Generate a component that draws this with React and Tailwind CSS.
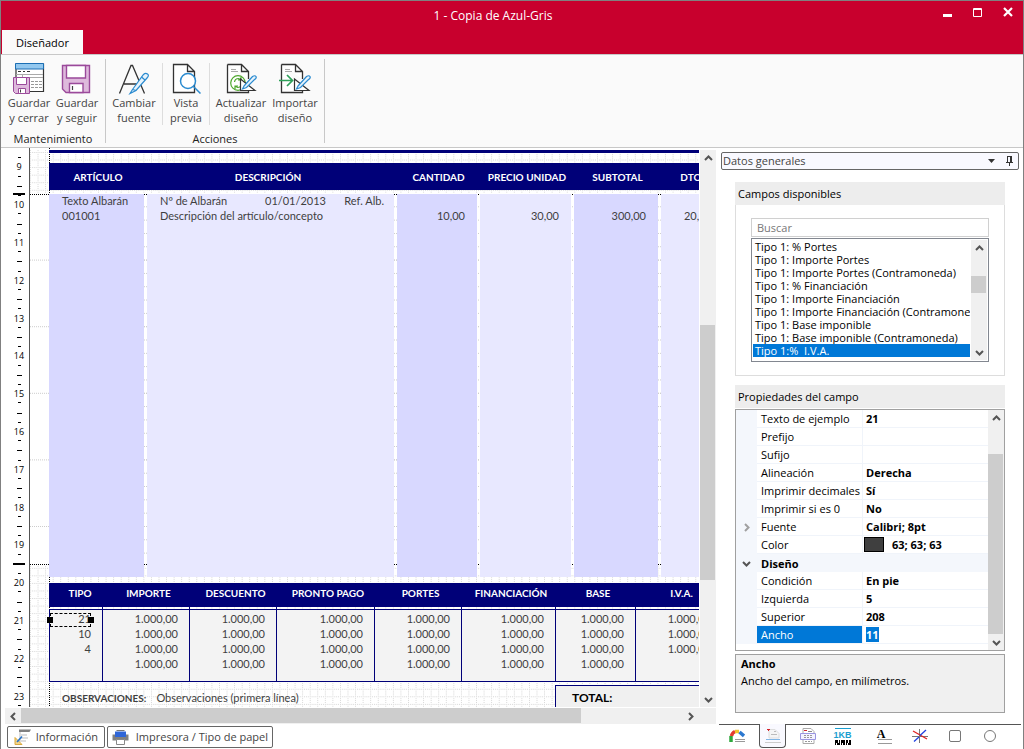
import { useState } from "react";

const fields = [
  "Tipo 1: % Portes",
  "Tipo 1: Importe Portes",
  "Tipo 1: Importe Portes (Contramoneda)",
  "Tipo 1: % Financiación",
  "Tipo 1: Importe Financiación",
  "Tipo 1: Importe Financiación (Contramoneda)",
  "Tipo 1: Base imponible",
  "Tipo 1: Base imponible (Contramoneda)",
  "Tipo 1:%  I.V.A.",
];

const properties = [
  { name: "Texto de ejemplo", value: "21" },
  { name: "Prefijo", value: "" },
  { name: "Sufijo", value: "" },
  { name: "Alineación", value: "Derecha" },
  { name: "Imprimir decimales", value: "Sí" },
  { name: "Imprimir si es 0", value: "No" },
  { name: "Fuente", value: "Calibri; 8pt", expandable: true },
  { name: "Color", value: "63; 63; 63", swatch: true },
  { name: "Diseño", group: true },
  { name: "Condición", value: "En pie" },
  { name: "Izquierda", value: "5" },
  { name: "Superior", value: "208" },
  { name: "Ancho", value: "11", editing: true },
];

const totalHeaders = ["TIPO", "IMPORTE", "DESCUENTO", "PRONTO PAGO", "PORTES", "FINANCIACIÓN", "BASE", "I.V.A."];
const amount = "1.000,00";
const totalRows = [
  ["21", amount, amount, amount, amount, amount, amount, amount],
  ["10", amount, amount, amount, amount, amount, amount, amount],
  ["4", amount, amount, amount, amount, amount, amount, amount],
  ["", amount, amount, amount, amount, amount, amount, ""],
];

const rulerMarks = [9, 10, 11, 12, 13, 14, 15, 16, 17, 18, 19, 20, 21, 22, 23];

/* ---------- icons ---------- */

function Floppy() {
  return (
    <g stroke="#9b4a9b" fill="#deb9dc">
      <path d="M1.5 1.5H28.5V28.5H5L1.5 25Z" strokeWidth="1.4" />
      <path d="M5.5 1.5H24.5V14H5.5Z" fill="#fff" strokeWidth="1.4" />
      <path d="M8.5 19.5H22V28.5H8.5Z" fill="#fff" strokeWidth="1.4" />
      <path d="M11.5 22V26" stroke="#444" strokeWidth="1.2" />
    </g>
  );
}

function SaveCloseIcon() {
  return (
    <svg width="32" height="32" viewBox="0 0 32 32" fill="none">
      <path d="M3 1H30.500V28.500H3Z" fill="#fff" stroke="#333" strokeWidth="1.200" />
      <path d="M2.500 .5H30.500V6H2.500Z" fill="#93c8ef" stroke="#1c6fb4" />
      <path d="M5 8.500H8M10 8.500H12M14 8.500H17" stroke="#333" />
      <path d="M3 11.500H30M9 14.500H30M9.500 11V15" stroke="#aaa" />
      <path d="M18 18.500H29M18 21.500H29M18 24.500H29" stroke="#999" strokeDasharray="3 1" />
      <g transform="translate(0 14)" stroke="#9b4a9b" fill="#deb9dc">
        <path d="M.5 .5H16.500V16.500H2.500L.5 14.500Z" />
        <path d="M3.500 .5H13.500V7.500H3.500Z" fill="#fff" />
        <path d="M5.500 11.500H12.500V16.500H5.500Z" fill="#fff" />
        <path d="M7.500 12.500V15.500" stroke="#444" />
      </g>
    </svg>
  );
}

function SaveIcon() {
  return (
    <svg width="32" height="32" viewBox="0 0 32 32" fill="none">
      <g transform="translate(0 1)"><Floppy /></g>
    </svg>
  );
}

function FontIcon() {
  return (
    <svg width="32" height="32" viewBox="0 0 32 32" fill="none">
      <path d="M1.500 30.500L13 2.500H14.500L26.500 30.500M6 21H22" stroke="#333" strokeWidth="1.300" />
      <g transform="translate(11 9)" stroke="#2b8bd0" strokeWidth="1.200" fill="#e6f3fc">
        <path d="M3.500 17.500L14.500 2.500Q16.500 .5 18.500 2T18 6L7 18.500L1 21.500Z" />
        <path d="M12.500 5L16 8M3.500 17.500L7 18.500" />
      </g>
    </svg>
  );
}

function PreviewIcon() {
  return (
    <svg width="32" height="32" viewBox="0 0 32 32" fill="none">
      <path d="M3.500 1.500H17.500L24.500 8.500V29.500H3.500ZM17.500 1.500V8.500H24.500" fill="#fff" stroke="#333" strokeWidth="1.300" />
      <circle cx="18" cy="18" r="7.500" fill="#fff" stroke="#2b8bd0" strokeWidth="1.500" />
      <path d="M23.500 23.500L30.500 30.500" stroke="#2b8bd0" strokeWidth="1.500" />
    </svg>
  );
}

function DesignIcon({ kind }) {
  return (
    <svg width="32" height="32" viewBox="0 0 32 32" fill="none">
      <path d="M2.500 1.500H16.500L23.500 8.500V16M23.500 28V29.500H2.500V1.500M16.500 1.500V8.500H23.500" fill="#fff" stroke="#333" strokeWidth="1.300" />
      <path d="M6 6.500H11M6 8.500H13" stroke="#aaa" />
      {kind === "refresh" ? (
        <g stroke="#4ea72e" strokeWidth="1.200">
          <circle cx="13" cy="20" r="7.300" fill="#fff" />
          <path d="M9.500 19Q10 15.500 13.500 15.500L16 17M16 14V17H13M16.500 21Q16 24.500 12.500 24.500L10 23M10 26V23H13" />
        </g>
      ) : (
        <path d="M0 17.500H13M8 12L13.500 17.500L8 23" stroke="#2fa15a" strokeWidth="1.700" />
      )}
      <path d="M15.500 16V27.500H30Z" fill="#fff" stroke="#333" strokeWidth="1.200" />
      <path d="M19 23L27.500 13.500Q30 12 31 13.500T29 17L21.500 24.500L17.500 26Z" fill="#e6f3fc" stroke="#2b8bd0" strokeWidth="1.200" />
    </svg>
  );
}

function Chevron({ dir = "up", muted }) {
  const turn = { up: "rotate-0", right: "rotate-90", down: "rotate-180", left: "-rotate-90" }[dir];
  return (
    <svg width="9" height="9" viewBox="0 0 9 9" className={turn} fill="none">
      <path d="M1 6L4.500 2.500L8 6" stroke={muted ? "#a0a0a0" : "#555"} strokeWidth="2" />
    </svg>
  );
}

function NotesIcon() {
  return (
    <svg width="18" height="18" viewBox="0 0 18 18" fill="none">
      <path d="M5 1.500H17L15.500 4H5Z" fill="#808080" />
      <path d="M6 4V14M7 7H13M7 10H14M7 13H12" stroke="#bbb" />
      <path d="M1 9.500V16.500H8Z" fill="#f4d58a" stroke="#d9a93c" />
      <path d="M3 14L8 8.500" stroke="#2873c8" strokeWidth="1.600" />
    </svg>
  );
}

function PrinterIcon() {
  return (
    <svg width="17" height="17" viewBox="0 0 17 17" fill="none">
      <path d="M.5 5.500H16.500V11.500H.5Z" fill="#808080" />
      <path d="M3 2.500H14V8H3Z" fill="#2f66d8" />
      <path d="M4.500 1.500H12.500" stroke="#777" />
      <path d="M4.500 10.500H12.500V15.500H4.500Z" fill="#fff" stroke="#888" />
    </svg>
  );
}

const toolTabs = [
  {
    label: "Datos",
    className: "w-9",
    icon: (
      <>
        <path d="M2 14V8" stroke="#2ea83c" strokeWidth="3.500" />
        <path d="M2.500 8Q3 5 6 3.500" stroke="#e23b2e" strokeWidth="3.500" />
        <path d="M6 3.500H10" stroke="#f2c32c" strokeWidth="3.500" />
        <path d="M10.500 4L15 8" stroke="#2b78d0" strokeWidth="3.500" />
        <path d="M6 11.500H16M6 13.500H16" stroke="#999" />
      </>
    ),
  },
  {
    label: "Propiedades",
    className: "mx-1 w-[27px] rounded-b border border-t-0 border-[#555] bg-[#f9f9ff]",
    icon: (
      <>
        <path d="M4 1.500H10L14 5.500V10H4Z" fill="#f5f5f5" stroke="#ddd" />
        <path d="M2 1.500H5M3.500 1V3" stroke="#d3222a" />
        <path d="M9 3.500H11M6 6.500H12" stroke="#bbb" />
        <path d="M1 11.500H15" stroke="#7fb6e6" />
        <path d="M0 14.500H16" stroke="#ccc" />
      </>
    ),
  },
  {
    label: "Impresión",
    className: "w-[35px]",
    icon: (
      <>
        <path d="M3 .5H11L14 3.500V15.500H3Z" fill="#fff" stroke="#aaa" />
        <path d="M4 2.500H7" stroke="#d3222a" />
        <path d="M8 3.500H12" stroke="#888" />
        <path d="M.5 5.500H15.500V11.500H.5Z" fill="#f3f2ff" stroke="#9a96e0" />
        <path d="M4 7.500H13M4 9.500H13M5 13.500H12" stroke="#999" strokeDasharray="2 1" />
      </>
    ),
  },
];

/* ---------- pieces ---------- */

function RibbonButton({ icon, top, bottom, className }) {
  return (
    <button type="button" className={`flex flex-col items-center text-[11px] leading-[15px] text-[#444] ${className}`}>
      {icon}
      <span>{top}</span>
      <span>{bottom}</span>
    </button>
  );
}

function ScrollButton({ dir }) {
  return (
    <button type="button" aria-label={dir} className="flex size-4 shrink-0 items-center justify-center">
      <Chevron dir={dir} />
    </button>
  );
}

function Ruler() {
  return (
    <div className="relative w-7 shrink-0 overflow-hidden">
      <div className="grid h-[567px] auto-rows-fr pl-2 text-[9px] leading-[1px]">
        {rulerMarks.map((n, i) => (
          <div key={n} className="flex flex-col items-center justify-between">
            <span className={`h-px w-[5px] ${i === 0 ? "" : "bg-black"}`} />
            <span className="h-px w-[3px] bg-black" />
            <span className="h-px">{n}</span>
            <span className="h-px w-[3px] bg-black" />
            <span className="h-px" />
          </div>
        ))}
      </div>
      <span className="absolute top-[45px] left-3 h-0.5 w-3 bg-black" />
      <span className="absolute top-[415px] left-3 h-0.5 w-3 bg-black" />
    </div>
  );
}

function CanvasGrid() {
  return (
    <svg className="absolute inset-0 size-full" fill="none" shapeRendering="crispEdges">
      <defs>
        <pattern id="fine" width="7.560" height="7.560" patternUnits="userSpaceOnUse" y="4">
          <path d="M0 .5H7.560" stroke="#d6d6d6" strokeDasharray="1 1" />
          <path d="M.5 0V7.560" stroke="#d6d6d6" strokeDasharray="1 1" />
        </pattern>
        <pattern id="coarse" width="66" height="66.600" patternUnits="userSpaceOnUse" y="45">
          <path d="M0 .5H66" stroke="#ccc" strokeDasharray="1 1" />
        </pattern>
        <pattern id="marks" width="66" height="13.320" patternUnits="userSpaceOnUse" y="45">
          <path d="M0 .5H66" stroke="#ccc" strokeDasharray="1 1" />
        </pattern>
      </defs>
      <rect y="2" width="100%" height="43" fill="url(#fine)" />
      <rect y="50" width="100%" height="360" fill="url(#coarse)" />
      <rect x="100" y="50" width="100%" height="360" fill="url(#marks)" />
      <rect y="417" width="100%" height="300" fill="url(#fine)" />
      <path d="M0 46.500H900M0 416.500H900M19.500 0V46M19.500 417V700" stroke="#000" strokeDasharray="1 1" />
    </svg>
  );
}

function ItemsTable() {
  const dark = "border-r-3 border-transparent bg-[#d8d8ff] bg-clip-padding";
  const light = "border-r-3 border-transparent bg-[#e8e8ff] bg-clip-padding";
  return (
    <table className="mt-[10px] w-[674px] table-fixed border-separate border-spacing-0">
      <colgroup>
        <col className="w-[98px]" />
        <col className="w-[250px]" />
        <col className="w-[83px]" />
        <col className="w-[94px]" />
        <col className="w-[87px]" />
        <col className="w-[62px]" />
      </colgroup>
      <thead>
        <tr className="h-[27px] bg-[#000078] text-[10px] text-white">
          <th className="pt-px">ARTÍCULO</th>
          <th className="pt-px pr-2">DESCRIPCIÓN</th>
          <th className="pt-px">CANTIDAD</th>
          <th className="pt-px">PRECIO UNIDAD</th>
          <th className="pt-px">SUBTOTAL</th>
          <th className="pt-px">DTO.</th>
        </tr>
        <tr className="h-1" />
      </thead>
      <tbody>
        <tr className="h-[383px] align-top leading-[13px]">
          <td className={`${dark} pl-[13px]`}>
            <div className="flex flex-col gap-0.5">
              <span>Texto Albarán</span>
              <span>001001</span>
            </div>
          </td>
          <td className={`${light} pl-[13px] whitespace-nowrap`}>
            <div className="flex flex-col gap-0.5">
              <div className="flex justify-between pr-[10px]">
                <span className="w-[105px]">Nº de Albarán</span>
                <span className="flex-1">01/01/2013</span>
                <span>Ref. Alb.</span>
              </div>
              <span>Descripción del artículo/concepto</span>
            </div>
          </td>
          <td className={`${dark} pt-[15px] pr-3 text-right`}>10,00</td>
          <td className={`${light} pt-[15px] pr-3 text-right`}>30,00</td>
          <td className={`${dark} pt-[15px] pr-3 text-right`}>300,00</td>
          <td className={`${light} pt-[15px] pr-2 text-right`}>20,00</td>
        </tr>
      </tbody>
    </table>
  );
}

function TotalsTable() {
  return (
    <table className="mt-[6px] w-[674px] table-fixed border-separate border-spacing-0">
      <colgroup>
        <col className="w-[54px]" />
        <col className="w-[87px]" />
        <col className="w-[87px]" />
        <col className="w-[98px]" />
        <col className="w-[87px]" />
        <col className="w-[94px]" />
        <col className="w-[80px]" />
        <col className="w-[87px]" />
      </colgroup>
      <thead>
        <tr className="h-6 bg-[#000078] text-[10px] leading-[15px] text-white">
          {totalHeaders.map((h, i) => (
            <th key={h} className={`pb-1 whitespace-nowrap ${i === 0 ? "pl-2" : "pl-1"}`}>{h}</th>
          ))}
        </tr>
        <tr className="h-0.5">
          {totalHeaders.map((h) => (
            <td key={h} className="border-r border-[#000078]" />
          ))}
        </tr>
      </thead>
      <tbody className="bg-[#f3f3f3] text-right leading-[15px]">
        {totalRows.map((row, r) => (
          <tr key={r}>
            {row.map((v, c) => (
              <td
                key={c}
                className={`relative border-r border-[#000078] pr-[11px] ${c === 0 ? "border-l" : ""} ${
                  r === 0 ? "border-t pt-px" : ""
                } ${r === 3 ? "h-[26px] border-b align-top" : ""}`}
              >
                {v}
                {r === 0 && c === 0 && (
                  <span className="absolute top-[3px] right-[11px] left-0 h-3.5 border border-dashed border-black">
                    <span className="absolute top-[3px] -left-1 size-1.5 bg-black" />
                    <span className="absolute top-[3px] -right-1 size-1.5 bg-black" />
                  </span>
                )}
              </td>
            ))}
          </tr>
        ))}
      </tbody>
    </table>
  );
}

function Canvas() {
  return (
    <div className="flex min-h-0 flex-1">
      <Ruler />
      <div className="relative min-w-0 flex-1 overflow-hidden border-l border-[#555] font-[Lato,sans-serif] text-[11px] text-[#3f3f3f]">
        <CanvasGrid />
        <div className="relative pt-0.5 pl-[19px]">
          <div className="h-[3px] bg-[#000078]" />
          <ItemsTable />
          <TotalsTable />
          <div className="flex justify-between pt-[3px]">
            <div className="flex items-baseline gap-2.5 pt-[5px] pl-[13px] whitespace-nowrap">
              <b className="text-[10px]">OBSERVACIONES:</b>
              <span>Observaciones (primera línea)</span>
            </div>
            <div className="h-10 w-36 shrink-0 border-t border-l border-[#000078] bg-[#f0f0f0] pt-0.5 pl-4 text-xs leading-5 font-bold text-black">
              TOTAL:
            </div>
          </div>
        </div>
      </div>
      <div className="mt-0.5 ml-px flex w-4 shrink-0 flex-col bg-[#f0f0f0]">
        <ScrollButton dir="up" />
        <div className="flex flex-1 flex-col pr-px">
          <span className="flex-[159]" />
          <span className="flex-[255] bg-[#cdcdcd]" />
          <span className="flex-[111]" />
        </div>
        <ScrollButton dir="down" />
      </div>
    </div>
  );
}

function PropertyGrid() {
  return (
    <div className="flex h-[242px] border border-[#a0a0a0]">
      <table className="h-[234px] flex-1 table-fixed border-separate border-spacing-0 self-start text-[11px] leading-[17px]">
        <colgroup>
          <col className="w-[21px]" />
          <col className="w-[106px]" />
          <col />
        </colgroup>
        <tbody>
          {properties.map((p) => (
            <tr key={p.name} className={`h-[18px] whitespace-nowrap ${p.group ? "bg-[#f4f7fc]" : ""}`}>
              <td className="bg-[#f4f7fc]">
                {(p.group || p.expandable) && (
                  <button type="button" aria-label={p.name} className="flex h-[17px] w-full items-center justify-center">
                    <Chevron dir={p.group ? "down" : "right"} muted={p.expandable} />
                  </button>
                )}
              </td>
              {p.group ? (
                <th colSpan={2} className="pl-1 text-left">{p.name}</th>
              ) : (
                <>
                  <td className={`border-r border-b border-[#f0f4fa] pl-1 ${p.editing ? "bg-[#0078d7] text-white" : ""}`}>
                    {p.editing ? <label htmlFor="ancho">{p.name}</label> : p.name}
                  </td>
                  <td className="border-b border-[#f0f4fa] pl-[3px] font-bold">
                    {p.editing ? (
                      <input id="ancho" defaultValue={p.value} className="block h-[15px] w-[13px] bg-[#0078d7] text-white" />
                    ) : (
                      <span className="flex items-center">
                        {p.swatch && <span className="mr-2 -ml-0.5 h-[15px] w-5 border border-black bg-[#3f3f3f]" />}
                        {p.value}
                      </span>
                    )}
                  </td>
                </>
              )}
            </tr>
          ))}
        </tbody>
      </table>
      <div className="flex w-4 flex-col bg-[#f0f0f0]">
        <ScrollButton dir="up" />
        <span className="h-7" />
        <span className="mr-px flex-1 bg-[#cdcdcd]" />
        <ScrollButton dir="down" />
      </div>
    </div>
  );
}

function SidePanel() {
  const [selected, setSelected] = useState(8);
  return (
    <aside className="flex w-[304px] shrink-0 flex-col pr-0.5">
      <div className="mx-0.5 mt-1 flex h-[18px] items-center rounded-xs border border-[#666] bg-[#f9f9ff] pr-1 pl-px text-[11px] text-[#444]">
        <h2 className="flex-1">Datos generales</h2>
        <button type="button" aria-label="Menú" className="mr-2.5">
          <svg width="7" height="4" viewBox="0 0 7 4"><path d="M0 0H7L3.500 4Z" fill="#333" /></svg>
        </button>
        <button type="button" aria-label="Fijar">
          <svg width="9" height="10" viewBox="0 0 9 10" fill="none" stroke="#333" shapeRendering="crispEdges">
            <path d="M2.500 6V.5H6.500V6M5.500 0V6M1 6.500H8M4.500 7V10" />
          </svg>
        </button>
      </div>

      <section className="mx-4 mt-3 border border-[#ddd]">
        <h3 className="-mx-px -mt-px h-[23px] bg-[#ededed] pl-[3px] text-[11px] leading-[23px] text-black">Campos disponibles</h3>
        <div className="px-[15px] pt-[13px] pb-[13px]">
          <input type="text" placeholder="Buscar" aria-label="Buscar"
            className="block h-[19px] w-full border border-[#d0d0d0] px-[5px] text-[11px] placeholder:text-[#777]" />
          <div className="mt-px flex h-[124px] border border-[#828790] p-px">
            <ul role="listbox" aria-label="Campos disponibles" className="min-w-0 flex-1 overflow-hidden text-[11px] leading-[13px] text-black">
              {fields.map((f, i) => (
                <li key={f} role="option" aria-selected={i === selected} onClick={() => setSelected(i)}
                  className={`overflow-hidden pl-0.5 whitespace-pre ${i === selected ? "bg-[#0078d7] text-white" : ""}`}>
                  {f}
                </li>
              ))}
            </ul>
            <div className="ml-px flex w-4 flex-col bg-[#f0f0f0]">
              <ScrollButton dir="up" />
              <span className="h-5" />
              <span className="mr-px h-[17px] bg-[#cdcdcd]" />
              <span className="flex-1" />
              <ScrollButton dir="down" />
            </div>
          </div>
        </div>
      </section>

      <section className="mx-4 mt-[9px]">
        <h3 className="mb-px h-[23px] bg-[#ededed] pl-[3px] text-[11px] leading-[23px] text-black">Propiedades del campo</h3>
        <PropertyGrid />
        <div className="mt-[3px] h-[59px] border border-[#a0a0a0] bg-[#f0f0f0] pl-[5px] text-[11px] leading-[17px]">
          <b>Ancho</b>
          <p>Ancho del campo, en milímetros.</p>
        </div>
      </section>

      <div className="mt-auto flex h-[25px] items-start border-t border-[#555]">
        {toolTabs.map((t) => (
          <button key={t.label} type="button" aria-label={t.label} className={`-mt-px flex h-6 items-center justify-center ${t.className}`}>
            <svg width="16" height="16" viewBox="0 0 16 16" fill="none">{t.icon}</svg>
          </button>
        ))}
        <button type="button" className="flex h-[22px] w-[35px] flex-col items-center justify-center text-[9px] leading-[9px] font-bold text-[#1a9ed0]">
          <span className="h-px w-4 bg-[#1a9ed0]" />
          <span className="mt-0.5 font-['Liberation_Sans',sans-serif]">1KB</span>
          <svg width="16" height="5" viewBox="0 0 16 5" fill="none" shapeRendering="crispEdges">
            <path d="M0 1.500H16" stroke="#000" strokeWidth="3" strokeDasharray="3 1 1 1 4 1 2 1" />
            <path d="M0 4H16" stroke="#000" strokeWidth="2" strokeDasharray="1 1 3 1 1 1 2 1" />
          </svg>
        </button>
        <button type="button" aria-label="Texto" className="flex h-[22px] w-[42px] flex-col items-center justify-center pl-2">
          <span className="mr-2 font-['Liberation_Serif',serif] text-xs leading-[10px] font-bold">A</span>
          <span className="h-[5px] w-3.5 border-y border-[#999]" />
        </button>
        <button type="button" aria-label="Línea" className="flex h-[22px] w-[35px] items-center justify-center">
          <svg width="16" height="16" viewBox="0 0 16 16" fill="none">
            <path d="M0 8.500H16M7.500 1V15" stroke="#777" />
            <path d="M1 3L15 11" stroke="#e02020" strokeWidth="1.300" />
            <path d="M14 2L8 7.500" stroke="#2040e0" strokeWidth="1.300" />
            <path d="M7 9L2 13.500" stroke="#2040e0" strokeWidth="1.300" />
          </svg>
        </button>
        <button type="button" aria-label="Rectángulo" className="flex h-[22px] w-[35px] items-center justify-center">
          <span className="size-3 rounded-xs border border-[#777]" />
        </button>
        <button type="button" aria-label="Elipse" className="flex h-[22px] w-[35px] items-center justify-center">
          <span className="size-3 rounded-full border border-[#777]" />
        </button>
      </div>
    </aside>
  );
}

export default function App() {
  return (
    <div className="flex h-screen flex-col overflow-hidden border-x border-t border-[#808080] bg-white font-['Open_Sans',sans-serif]">
      <header className="relative flex h-[53px] shrink-0 items-end bg-[#c8002d]">
        <button type="button" className="relative ml-px h-6 w-[81px] bg-[#fafafa] pt-0.5 text-[11px] text-black">Diseñador</button>
        <h1 className="absolute inset-x-0 top-[7px] pr-[38px] text-center text-xs text-white">1 - Copia de Azul-Gris</h1>
        <div className="absolute top-[6px] right-[10px] flex gap-[21px] text-white">
          <button type="button" aria-label="Minimizar"><svg width="9" height="10"><path d="M0 7H9V10H0Z" fill="#fff" /></svg></button>
          <button type="button" aria-label="Maximizar">
            <svg width="9" height="10" fill="none"><path d="M.5 1.500H8.500V9.500H.5ZM0 2.500H9" stroke="#fff" /></svg>
          </button>
          <button type="button" aria-label="Cerrar"><svg width="10" height="10" fill="none"><path d="M1 1L9 9M9 1L1 9" stroke="#fff" strokeWidth="2.200" /></svg></button>
        </div>
      </header>

      <div className="flex h-[94px] shrink-0 border-y border-[#c8c8c8] bg-[#fafafa] pt-1 text-[11px]">
        <section className="flex h-[84px] w-[105px] flex-col border-r border-[#c8c8c8] pt-1">
          <div className="flex pl-1">
            <RibbonButton className="w-12" icon={<SaveCloseIcon />} top="Guardar" bottom="y cerrar" />
            <RibbonButton className="w-12" icon={<SaveIcon />} top="Guardar" bottom="y seguir" />
          </div>
          <h2 className="mt-auto text-center leading-[9px] text-[#222]">Mantenimiento</h2>
        </section>
        <section className="flex h-[84px] w-[219px] flex-col border-r border-[#c8c8c8] pt-1">
          <div className="flex">
            <RibbonButton className="w-14" icon={<FontIcon />} top="Cambiar" bottom="fuente" />
            <RibbonButton className="w-12 border-x border-[#ddd]" icon={<PreviewIcon />} top="Vista" bottom="previa" />
            <RibbonButton className="w-[62px]" icon={<DesignIcon kind="refresh" />} top="Actualizar" bottom="diseño" />
            <RibbonButton className="w-[46px]" icon={<DesignIcon kind="import" />} top="Importar" bottom="diseño" />
          </div>
          <h2 className="mt-auto text-center leading-[9px] text-[#222]">Acciones</h2>
        </section>
      </div>

      <div className="flex min-h-0 flex-1">
        <main className="mr-[3px] flex min-w-0 flex-1 flex-col">
          <Canvas />
          <div className="mt-px ml-1 flex h-4 shrink-0 bg-[#f0f0f0] pr-[18px]">
            <ScrollButton dir="left" />
            <div className="flex flex-1 pb-px">
              <span className="flex-[560] bg-[#cdcdcd]" />
              <span className="flex-[101]" />
            </div>
            <ScrollButton dir="right" />
          </div>
          <footer className="mt-0.5 mb-px ml-[6px] flex h-[22px] shrink-0 gap-0.5 text-[11px] whitespace-nowrap text-[#444]">
            <button type="button" className="flex w-[98px] items-center justify-between rounded-xs border border-[#666] px-1.5">
              <NotesIcon />
              Información
            </button>
            <button type="button" className="flex w-[166px] items-center justify-between rounded-xs border border-[#666] px-1">
              <PrinterIcon />
              Impresora / Tipo de papel
            </button>
          </footer>
        </main>
        <SidePanel />
      </div>
    </div>
  );
}
